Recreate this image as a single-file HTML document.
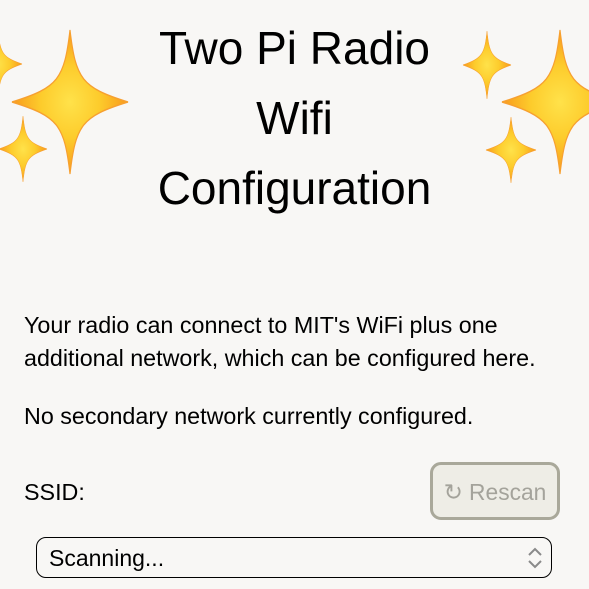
<!DOCTYPE html>
<html><head><meta charset="utf-8"><style>
html,body{margin:0;padding:0;background:#f8f7f5;width:589px;height:589px;overflow:hidden;font-family:"Liberation Sans",sans-serif;color:#000}
.t{position:absolute;left:0;width:589px;text-align:center;font-size:46px;line-height:46px}
.p{position:absolute;left:24px;font-size:23.3px;line-height:26px;white-space:nowrap}
.btn{position:absolute;left:430px;top:462px;width:124px;height:52px;border:3px solid #a9a89a;border-radius:11px;background:#eeede6;color:#a4a39b;font-size:22.8px;line-height:54px;text-align:center}
.sel{position:absolute;left:36px;top:537px;width:514px;height:39px;border:1.5px solid #000;border-radius:10px;font-size:23px;line-height:41px;box-sizing:content-box}
svg{position:absolute;left:0;top:0}
</style></head><body>
<svg width="589" height="589">
<defs>
<radialGradient id="g" cx="0.5" cy="0.5" r="0.5"><stop offset="0" stop-color="#ffe24a"/><stop offset="0.5" stop-color="#fdcc2c"/><stop offset="1" stop-color="#f89a1c"/></radialGradient>
<path id="s" d="M0,-50 C5,-16 10,-10 50,0 C10,10 5,16 0,50 C-5,16 -10,10 -50,0 C-10,-10 -5,-16 0,-50Z" fill="url(#g)" stroke="#f7a030" stroke-width="1"/>
</defs>
<use href="#s" transform="translate(70,102) scale(1.16,1.44)"/>
<use href="#s" transform="translate(23,149) scale(0.48,0.66)"/>
<use href="#s" transform="translate(-2,64) scale(0.48,0.66)"/>
<use href="#s" transform="translate(560,102) scale(1.16,1.44)"/>
<use href="#s" transform="translate(487,65) scale(0.48,0.68)"/>
<use href="#s" transform="translate(511,150) scale(0.5,0.66)"/>
</svg>
<div class="t" style="top:25px">Two Pi Radio</div>
<div class="t" style="top:95px">Wifi</div>
<div class="t" style="top:165px">Configuration</div>
<div class="p" style="top:312px">Your radio can connect to MIT's WiFi plus one</div>
<div class="p" style="top:345px">additional network, which can be configured here.</div>
<div class="p" style="top:403px">No secondary network currently configured.</div>
<div class="p" style="top:479px">SSID:</div>
<div class="btn">↻ Rescan</div>
<div class="sel"><span style="position:absolute;left:12px">Scanning...</span>
<svg width="16" height="22" style="left:490px;top:9px"><path d="M2,8 L8,2 L14,8 M2,14 L8,20 L14,14" fill="none" stroke="#8a8a8a" stroke-width="2"/></svg></div>
</body></html>
